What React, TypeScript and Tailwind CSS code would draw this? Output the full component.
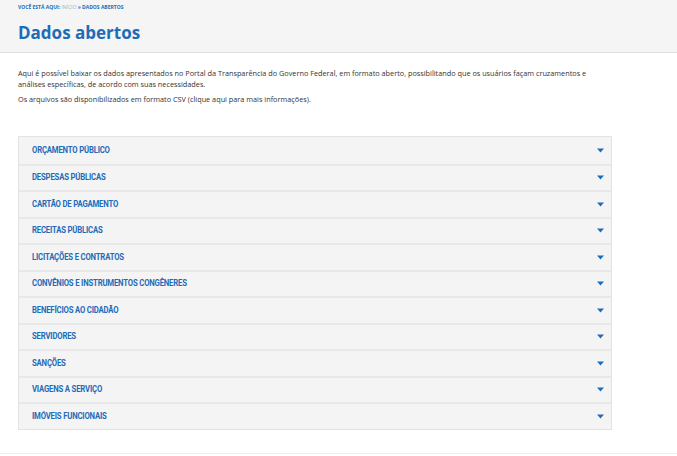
const sections = [
  "ORÇAMENTO PÚBLICO",
  "DESPESAS PÚBLICAS",
  "CARTÃO DE PAGAMENTO",
  "RECEITAS PÚBLICAS",
  "LICITAÇÕES E CONTRATOS",
  "CONVÊNIOS E INSTRUMENTOS CONGÊNERES",
  "BENEFÍCIOS AO CIDADÃO",
  "SERVIDORES",
  "SANÇÕES",
  "VIAGENS A SERVIÇO",
  "IMÓVEIS FUNCIONAIS",
];

const Caret = () => (
  <svg width="7" height="5" viewBox="0 0 7 5" className="shrink-0">
    <path d="M0 0.5 H7 L3.5 4.5 Z" fill="#1e6bb8" />
  </svg>
);

const App = () => {
  return (
    <div className="min-h-[456px] bg-white font-['Open_Sans',sans-serif] text-[#333]">
      {/* Header */}
      <header className="h-[53px] bg-[#f5f5f5] border-b border-[#dedede] px-[18px] pt-[4px]">
        <p className="text-[5px] font-bold leading-[7px] text-[#1e6bb8]">
          VOCÊ ESTÁ AQUI:{" "}
          <span className="font-normal text-[#9fb3c8]">INÍCIO</span> » DADOS
          ABERTOS
        </p>
        <h1 className="mt-[11px] text-[17px] font-bold leading-[22px] text-[#1e6bb8]">
          Dados abertos
        </h1>
      </header>

      <main className="px-[18px] pt-[15px]">
        <p className="text-[7.3px] leading-[11px] w-[590px]">
          Aqui é possível baixar os dados apresentados no Portal da
          Transparência do Governo Federal, em formato aberto, possibilitando
          que os usuários façam cruzamentos e análises específicas, de acordo
          com suas necessidades.
        </p>
        <p className="mt-[4px] text-[7.3px] leading-[11px]">
          Os arquivos são disponibilizados em formato CSV (clique aqui para
          mais informações).
        </p>

        <div className="mt-[31px] w-[594px] border border-[#e3e3e3] bg-[#f4f4f4]">
          {sections.map((s, i) => (
            <div
              key={s}
              className={`flex h-[26.5px] items-center justify-between pl-[13px] pr-[7px] ${
                i > 0 ? "border-t-2 border-[#e8e8e8]" : ""
              }`}
            >
              <span className="font-['Roboto',sans-serif] text-[8.6px] font-bold tracking-[-0.2px] text-[#1e6bb8] scale-x-[0.9] origin-left">
                {s}
              </span>
              <Caret />
            </div>
          ))}
        </div>
      </main>
      <div className="mt-[23px] border-t border-[#eeeeee]" />
    </div>
  );
};

export default App;
